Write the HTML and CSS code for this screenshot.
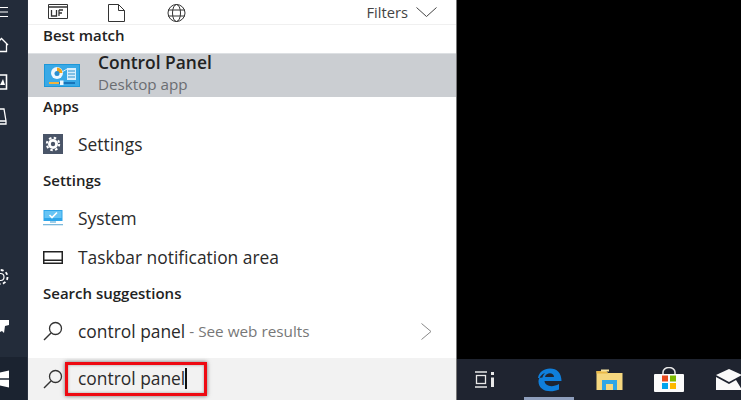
FILE: index.html
```html
<!DOCTYPE html>
<html lang="en">
<head>
<meta charset="utf-8">
<title>Control Panel search</title>
<link rel="stylesheet" href="styles.css">
</head>
<body>
<div class="screen">
  <aside class="rail">
    <div class="rail-top">
      <svg class="rail-icon menu" width="9" height="12" viewBox="0 0 9 12"><path d="M0 1.500H8M0 6H8M0 10.500H8" stroke="#fff" stroke-width="1.200" fill="none"/></svg>
      <svg class="rail-icon home" width="9" height="16" viewBox="0 0 9 16"><path d="M-5 8 L1.500 1.500 L8 8 M6.500 7V14.500H-3" stroke="#fff" stroke-width="1.300" fill="none"/></svg>
      <svg class="rail-icon photo" width="8" height="17" viewBox="0 0 8 17"><path d="M-3 1H6.500V15H-3" stroke="#fff" stroke-width="1.600" fill="none"/><path d="M0 11 L3 5 L5 11Z" fill="#fff"/></svg>
      <svg class="rail-icon doc" width="8" height="17" viewBox="0 0 8 17"><path d="M-2 1H4L6 13V16H-2M-2 13H6" stroke="#fff" stroke-width="1.300" fill="none"/></svg>
    </div>
    <div class="rail-bottom">
      <svg class="rail-icon gear" width="10" height="20" viewBox="0 0 10 20"><circle cx="0.500" cy="10" r="3.500" stroke="#fff" stroke-width="1.200" fill="none"/><circle cx="0.500" cy="10" r="7" stroke="#fff" stroke-width="1.800" stroke-dasharray="3 2.500" fill="none"/></svg>
      <svg class="rail-icon power" width="9" height="15" viewBox="0 0 9 15"><path d="M0 1H9V6L5 7L4 14L2 12L0 13Z" fill="#fff"/></svg>
    </div>
    <div class="start">
      <svg width="9" height="18" viewBox="0 0 9 18"><path d="M0 2.500L9 .5V8.300H0ZM0 9.700H9V17.500L0 15.500Z" fill="#fff"/></svg>
    </div>
  </aside>

  <main class="panel">
    <header class="tabs">
      <svg class="tab-apps" width="20" height="15" viewBox="0 0 20 15"><path d="M.5.5H19.500V14.500H.5Z" stroke="#333" fill="none"/><path d="M.5 3H19.500" stroke="#333" stroke-width="1.500"/><path d="M3.500 6V12H8.500V6M11 6V12M11 6H15M11 9H14" stroke="#333" stroke-width="1.300" fill="none"/></svg>
      <svg class="tab-doc" width="17" height="18" viewBox="0 0 17 18"><path d="M.5.5H10.500L16.500 6.500V17.500H.5ZM10.500.5V6.500H16.500" stroke="#333" fill="none"/></svg>
      <svg class="tab-web" width="21" height="18" viewBox="0 0 21 18"><g stroke="#333" fill="none"><circle cx="10.500" cy="9" r="8.500"/><ellipse cx="10.500" cy="9" rx="4" ry="8.500"/><path d="M2 6H19M2 12H19"/></g></svg>
      <span class="filters">Filters</span>
      <svg class="chevron-down" width="21" height="11" viewBox="0 0 21 11"><path d="M.5.5L10.500 9.500L20.500.5" stroke="#444" fill="none"/></svg>
    </header>

    <h2 class="heading h-best">Best match</h2>
    <div class="best">
      <svg class="cp-icon" width="36" height="23" viewBox="0 0 36 23">
        <rect width="36" height="23" fill="#1c97d8"/>
        <rect x="1" y="1" width="34" height="21" fill="#39a9e6"/>
        <circle cx="13" cy="9" r="6" fill="#eef7fd"/>
        <path d="M13 9V3.500A5.500 5.500 0 0 1 18.500 9Z" fill="#f2a41c"/>
        <circle cx="13" cy="9.500" r="2.500" fill="#2a8fd0"/>
        <rect x="23" y="4" width="9" height="12" fill="#d8eefb"/>
        <path d="M24 7H31M24 10H31M24 13H31" stroke="#2a8fd0" stroke-width="1.200"/>
        <path d="M18 8L23 5" stroke="#d8eefb"/>
        <rect x="5" y="18" width="10" height="2" fill="#f2b33d"/>
        <rect x="15" y="18" width="16" height="2" fill="#1874b8"/>
        <rect x="16" y="16.500" width="3.500" height="4.500" fill="#eef7fd"/>
      </svg>
      <div class="best-text">
        <div class="best-title">Control Panel</div>
        <div class="best-sub">Desktop app</div>
      </div>
    </div>

    <h2 class="heading h-apps">Apps</h2>
    <div class="row r-settings">
      <svg class="row-icon" width="20" height="20" viewBox="0 0 20 20"><rect width="20" height="20" fill="#4a5568"/><circle cx="10" cy="10" r="5" fill="#fff"/><circle cx="10" cy="10" r="6.200" stroke="#fff" stroke-width="2" stroke-dasharray="2.500 2.370" fill="none"/><circle cx="10" cy="10" r="2.200" fill="#4a5568"/></svg>
      <span>Settings</span>
    </div>
    <h2 class="heading h-settings">Settings</h2>
    <div class="row r-system">
      <svg class="row-icon" width="20" height="16" viewBox="0 0 20 16"><rect x=".5" width="19" height="11" fill="#2ea6ea"/><path d="M1.500 1H18.500V8H1.500Z" fill="#67c4f4"/><path d="M6.500 5L9 7.500L14 2.500" stroke="#fff" stroke-width="1.600" fill="none"/><rect x="7" y="11" width="6" height="2" fill="#9fcfe9"/><rect y="14" width="20" height="1.300" fill="#7cb9dc"/></svg>
      <span>System</span>
    </div>
    <div class="row r-taskbar">
      <svg class="row-icon" width="20" height="13" viewBox="0 0 20 13"><rect x=".75" y=".75" width="18.500" height="11.500" stroke="#222" stroke-width="1.500" fill="none"/><rect x="1" y="8.500" width="18" height="1.500" fill="#222"/></svg>
      <span>Taskbar notification area</span>
    </div>
    <h2 class="heading h-sugg">Search suggestions</h2>
    <div class="row r-sugg">
      <svg class="row-icon search" width="20" height="20" viewBox="0 0 20 20"><circle cx="12.500" cy="7.500" r="6" stroke="#333" stroke-width="1.300" fill="none"/><path d="M8 12L1 19" stroke="#333" stroke-width="1.500"/></svg>
      <span>control panel</span><span class="hint"> - See web results</span>
      <svg class="chevron-right" width="11" height="17" viewBox="0 0 11 17"><path d="M.5.5L10 8.500L.5 16.500" stroke="#888" fill="none"/></svg>
    </div>

    <div class="searchbar">
      <svg class="row-icon search" width="20" height="20" viewBox="0 0 20 20"><circle cx="12.500" cy="7.500" r="6" stroke="#333" stroke-width="1.300" fill="none"/><path d="M8 12L1 19" stroke="#333" stroke-width="1.500"/></svg>
      <div class="query"><span>control panel</span><i class="caret"></i></div>
    </div>
  </main>

  <section class="desktop">
    <div class="wallpaper"></div>
    <div class="taskbar">
      <div class="tb-item view">
        <svg width="21" height="17" viewBox="0 0 21 17"><g stroke="#e8e8e8" fill="none" stroke-width="1.300"><path d="M1 1H13M1 16H13"/><rect x="2.500" y="4.500" width="9" height="8"/></g><path d="M17 1H20V4H17ZM17 6.500H20V16H17Z" fill="#e8e8e8"/></svg>
      </div>
      <div class="tb-item active">
        <svg width="26" height="24" viewBox="0 0 26 24"><path d="M2 10C3 4 8 .5 14 .5C21 .5 25.500 5 25.500 13H8.500C9 18 16 20 23 16V21.500C14 25.500 2 23 2.500 13C3 9 6 6 9 5C7 7 6.500 8.500 6.500 9.500M9 9H18C18 4 10 4 9 9Z" fill="#0f7fdc" fill-rule="evenodd"/></svg>
      </div>
      <div class="tb-item">
        <svg width="27" height="21" viewBox="0 0 27 21"><path d="M.5 2H10L12 4H26.500V21H.5Z" fill="#f5d77f"/><path d="M.5 2H10L12 4.500H.5Z" fill="#e9b949"/><rect x="5" y=".5" width="8" height="2" fill="#f7e39e"/><path d="M6 11H21V21H17V15H10V21H6Z" fill="#2ea6e6"/></svg>
      </div>
      <div class="tb-item">
        <svg width="30" height="25" viewBox="0 0 30 25"><path d="M9 8V5A6 4.500 0 0 1 21 5V8" stroke="#e8e8e8" stroke-width="1.500" fill="none"/><rect y="7" width="30" height="18" rx="1" fill="#fbfbfb"/><rect x="8" y="8.500" width="6" height="6" fill="#e8491d"/><rect x="16" y="8.500" width="6" height="6" fill="#7db900"/><rect x="8" y="16" width="6" height="6" fill="#00a3ee"/><rect x="16" y="16" width="6" height="6" fill="#fdb900"/></svg>
      </div>
      <div class="tb-item mail">
        <svg width="26" height="22" viewBox="0 0 26 22"><path d="M0 6L13 0L26 6L13 13Z" fill="#fafafa"/><path d="M0 8L13 15L20 11L26 21H0Z" fill="#fafafa"/></svg>
      </div>
    </div>
  </section>
</div>
</body>
</html>
```

FILE: styles.css
```css
* { box-sizing: border-box; }
html, body { margin: 0; height: 100%; overflow: hidden; background: #000; }
.screen {
  display: flex;
  width: 741px;
  height: 400px;
  font-family: "Open Sans", "Noto Sans", sans-serif;
  color: #1f1f1f;
}

/* Left rail */
.rail {
  width: 28px;
  flex: none;
  display: flex;
  flex-direction: column;
  background: #232c3a;
  border-right: 1px solid #2a3240;
}
.rail-top { display: flex; flex-direction: column; padding-top: 6px; }
.rail-icon { display: block; overflow: hidden; }
.menu { margin-bottom: 19px; }
.home { margin-bottom: 21px; }
.photo { margin-bottom: 17px; }
.rail-bottom { margin-top: auto; display: flex; flex-direction: column; }
.gear { margin-bottom: 32px; }
.power { margin-bottom: 23px; }
.start {
  height: 43px;
  background: #1b2330;
  display: flex;
  align-items: center;
}

/* Search panel */
.panel {
  width: 428px;
  flex: none;
  display: flex;
  flex-direction: column;
  background: #fff;
}
.tabs {
  height: 25px;
  flex: none;
  display: flex;
  align-items: flex-start;
  padding: 4px 19px 0 20px;
  border-bottom: 1px solid #f0f0f0;
}
.tab-apps { margin-right: 40px; }
.tab-doc { margin-right: 41px; }
.filters {
  margin-left: auto;
  margin-right: 8px;
  font-size: 14.700px;
  line-height: 17px;
  color: #444;
}
.chevron-down { margin-top: 3px; }

.heading {
  margin: 0;
  padding-left: 15px;
  font-size: 15px;
  font-weight: 600;
  line-height: 18px;
  color: #222;
}
.h-best { margin-top: 1px; height: 27px; }
.h-apps { height: 20px; }
.h-settings { height: 21px; }
.h-sugg { height: 20px; }

.best {
  height: 44px;
  flex: none;
  display: flex;
  align-items: center;
  padding-left: 16px;
  background: #cbced2;
  border-top: 1px solid #dde0e3;
}
.cp-icon { margin-right: 18px; }
.best-text { display: flex; flex-direction: column; margin-top: -2px; }
.best-title { font-size: 17.400px; font-weight: 600; line-height: 20px; color: #222; }
.best-sub { font-size: 15.200px; line-height: 25px; color: #6a6d71; }

.row {
  display: flex;
  align-items: center;
  padding-left: 15px;
  font-size: 17.400px;
  color: #2a2a2a;
  white-space: pre;
}
.row-icon { flex: none; margin-right: 15px; }
.r-settings { height: 54px; }
.r-system { height: 54px; margin-top: -1px; }
.r-taskbar { height: 24px; margin-bottom: 15px; }
.r-sugg { height: 54px; padding-right: 24px; }
.hint { font-size: 15.300px; color: #777; }
.chevron-right { margin-left: auto; }

.searchbar {
  flex: 1;
  display: flex;
  align-items: center;
  padding-left: 15px;
  background: #f2f2f2;
}
.searchbar .search { margin-right: 2px; margin-top: -1px; }
.query {
  width: 142px;
  height: 34px;
  display: flex;
  align-items: center;
  padding: 0 0 2px 10px;
  border: 3px solid #ee0a12;
  box-shadow: 0 0 4px rgba(0,0,0,.55), inset 0 0 3px rgba(0,0,0,.35);
  font-size: 17.400px;
  color: #2a2a2a;
}
.caret {
  width: 1.500px;
  height: 21px;
  background: #111;
}

/* Right side */
.desktop {
  flex: 1;
  display: flex;
  flex-direction: column;
  background: #000;
  border-left: 1px solid #777;
}
.wallpaper { flex: 1; }
.taskbar {
  height: 41px;
  flex: none;
  display: flex;
  align-items: center;
  background: #1f2430;
  overflow: hidden;
  padding-left: 3px;
}
.tb-item {
  flex: none;
  width: 60px;
  height: 41px;
  display: flex;
  align-items: center;
  justify-content: center;
}
.tb-item.view { width: 48px; }
.tb-item.active {
  width: 50px;
  margin: 0 5px 0 16px;
  border-bottom: 3px solid #8f9fbd;
  padding-top: 3px;
}
.tb-item.mail { justify-content: flex-start; padding-left: 17px; }
```
